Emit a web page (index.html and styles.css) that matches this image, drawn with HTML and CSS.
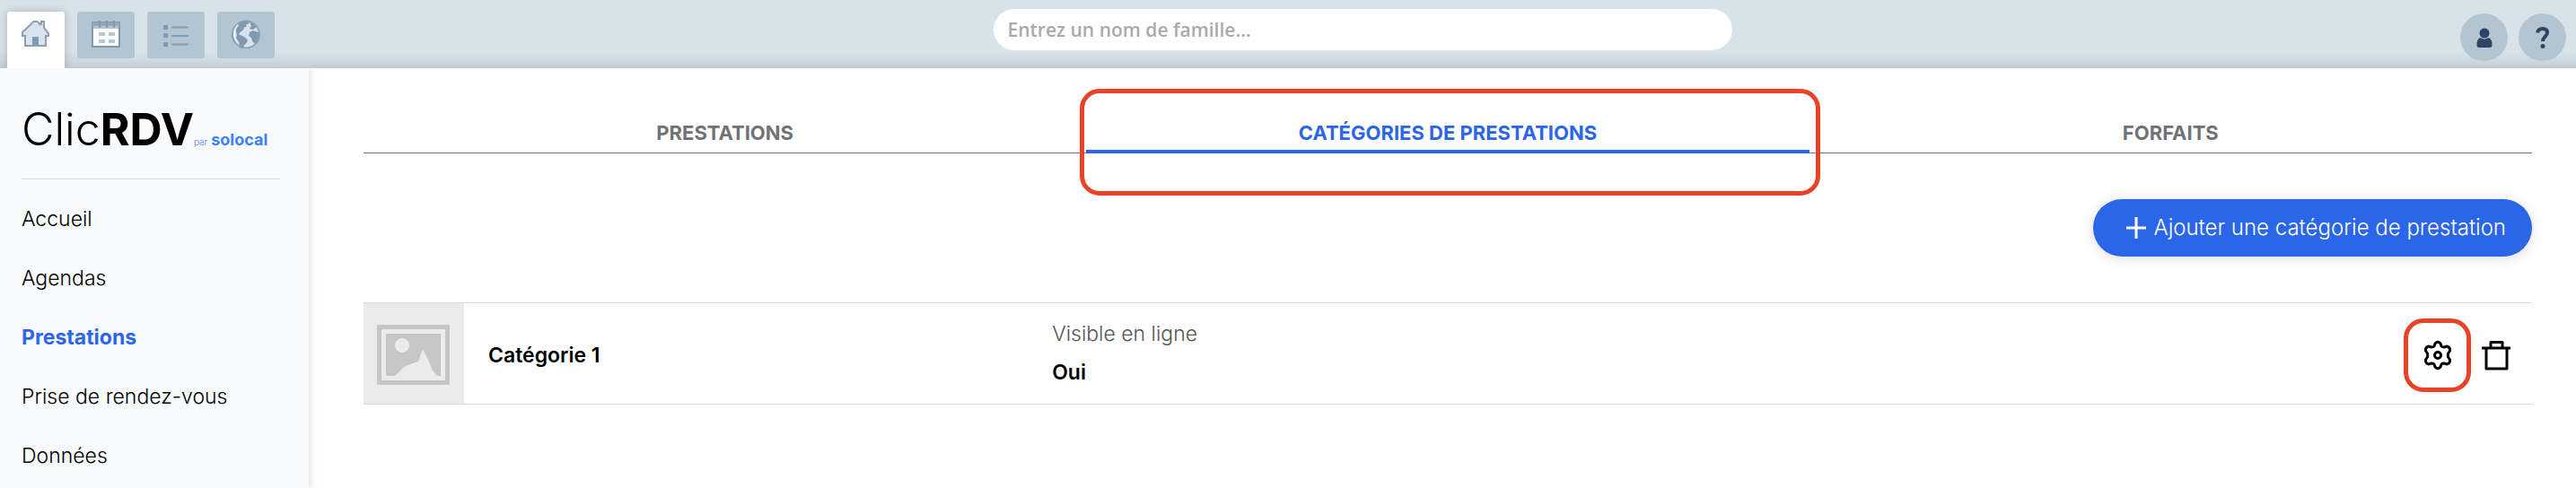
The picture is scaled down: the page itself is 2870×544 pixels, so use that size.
FILE: index.html
```html
<!DOCTYPE html>
<html lang="fr">
	<head>
		<meta charset="utf-8" />
		<title>ClicRDV - Catégories de prestations</title>
		<link rel="stylesheet" href="styles.css">
	</head>
	<body>
		<header class="topbar">
			<nav class="modules">
				<a href="#" class="module active" aria-label="Accueil">
					<svg width="32" height="32" viewBox="0 0 32 32">
						<path d="M1 17v-3L13.500 2h4L21 5.500 22 5V2h3v7l5 6v3h-3v11H4V18H1z" fill="#d8e3ee" stroke="#8aa2b7" stroke-width="2"/>
						<path d="M12 19h7v10h-7z" fill="#7f9ab1"/>
					</svg>
				</a>
				<a href="#" class="module" aria-label="Agenda">
					<svg width="32" height="32" viewBox="0 0 32 32">
						<path d="M1 3h30v27H1z" fill="#fff" stroke="#7f9ab1" stroke-width="2"/>
						<path d="M2 4h28v6H2z" fill="#b4c5d2"/>
						<path d="M1 3h30v4H1z" fill="#92a9bb"/>
						<path d="M9 1v8M17 1v8M25 1v8" stroke="#7f9ab1" stroke-width="2"/>
						<path d="M8 14h7v4H8zM19 14h7v4h-7zM8 22h7v4H8zM19 22h7v4h-7z" fill="#b7c7d3"/>
					</svg>
				</a>
				<a href="#" class="module" aria-label="Liste">
					<svg width="32" height="32" viewBox="0 0 32 32">
						<path d="M2 6h5v5H2zM2 15h5v5H2zM2 25h5v5H2z" fill="#7f9ab1"/>
						<path d="M12 8.500h17M12 18h17M12 27.500h17" stroke="#7f9ab1" stroke-width="2" stroke-linecap="round"/>
					</svg>
				</a>
				<a href="#" class="module" aria-label="Site web">
					<svg width="32" height="32" viewBox="0 0 32 32">
						<circle cx="16" cy="16.500" r="15" fill="#d8e3ee" stroke="#8aa2b7" stroke-width="2"/>
						<path d="M7 4.500Q11 1 17 1.500l3 1-1 2-3 1 1 2-3 1-1 3-3 2-2 3 3 1 4 2 3 3-1 3-3 3-1 4-4-2-1-6-3-4 1-4-2-5z" fill="#7f9ab1"/>
						<path d="M7 5q-5 5-5 12 1 5 4 8l-2-7 1-8 3-4z" fill="#f2f6f9"/>
						<path d="M20 3q5 1 8 6l-4 2-4-1 2-3z" fill="#7f9ab1"/>
						<path d="M20 14l4-2 6 2q2 7-4 13l-3-3-1-4-3-2z" fill="#7f9ab1"/>
						<path d="M24 10l4-1v2z" fill="#d8e3ee"/>
					</svg>
				</a>
			</nav>
			<form class="search">
				<input type="text" aria-label="Rechercher un client" placeholder="Entrez un nom de famille...">
			</form>
			<div class="tools">
				<button type="button" class="round" aria-label="Mon compte">
					<svg width="18" height="22" viewBox="0 0 18 22">
						<circle cx="9" cy="6" r="5.500" fill="#2c4566"/>
						<path d="M4.500 11Q9 14.500 13.500 11q4 1 4 8 0 3-2.500 3H3q-2.500 0-2.500-3 0-7 4-8z" fill="#2c4566"/>
					</svg>
				</button>
				<button type="button" class="round" aria-label="Aide">
					<svg width="16" height="24" viewBox="0 0 16 24">
						<path d="M2 6.500C2.500 3.500 5 2 8 2s5 1.500 5 4.500c0 4-5 4.500-5 9.500" fill="none" stroke="#2c4566" stroke-width="4"/>
						<circle cx="8" cy="21.500" r="2.500" fill="#2c4566"/>
					</svg>
				</button>
			</div>
		</header>
		<div class="page">
			<aside class="sidebar">
				<div class="logo">
					<span class="clic">Clic</span><span class="rdv">RDV</span>
					<span class="par">par</span>
					<span class="solocal">solocal</span>
				</div>
				<ul class="menu">
					<li><a href="#">Accueil</a></li>
					<li><a href="#">Agendas</a></li>
					<li><a href="#" class="current">Prestations</a></li>
					<li><a href="#">Prise de rendez-vous</a></li>
					<li><a href="#">Données</a></li>
				</ul>
			</aside>
			<main class="content">
				<nav class="tabs">
					<a href="#" class="tab">PRESTATIONS</a>
					<a href="#" class="tab selected">CATÉGORIES DE PRESTATIONS</a>
					<a href="#" class="tab">FORFAITS</a>
				</nav>
				<div class="actions">
					<button type="button" class="add">
						<svg width="22" height="24" viewBox="0 0 22 24">
							<path d="M11 0v24M0 12h22" stroke="#fff" stroke-width="3"/>
						</svg>
						Ajouter une catégorie de prestation
					</button>
				</div>
				<div class="category">
					<svg class="thumb" width="112" height="112" viewBox="0 0 112 112">
						<path d="M0 0h112v112H0z" fill="#ebebeb"/>
						<path d="M17.500 26.500h76v62h-76z" fill="#ebebeb" stroke="#c6c6c6" stroke-width="5"/>
						<path d="M25 34h61v47H25z" fill="#c6c6c6"/>
						<circle cx="43" cy="47" r="8" fill="#ebebeb"/>
						<path d="M35 81l10-10 10-4 6-2 5-14 6 12 5 12 5 6z" fill="#ebebeb"/>
					</svg>
					<div class="name">Catégorie 1</div>
					<div class="online">
						<div class="label">Visible en ligne</div>
						<div class="value">Oui</div>
					</div>
					<div class="buttons">
						<button type="button" class="icon settings" aria-label="Paramètres">
							<svg width="32" height="34" viewBox="0 0 32 34">
								<path d="M13 4Q16 .500 19 4l1 3q1 1 3 1l3-1q4 1 3.500 5l-2 3q-.500 2 0 4l2 3q.500 4-3.500 5l-3-1q-2 0-3 1l-1 3q-3 3.500-6 0l-1-3q-1-1-3-1l-3 1q-4-1-3.500-5l2-3q.500-2 0-4l-2-3Q2 8 6 7l3 1q2 0 3-1z" fill="none" stroke="#000" stroke-width="3"/>
								<circle cx="16" cy="17" r="3.500" fill="none" stroke="#000" stroke-width="3"/>
							</svg>
						</button>
						<button type="button" class="icon" aria-label="Supprimer">
							<svg width="32" height="34" viewBox="0 0 32 34">
								<path d="M0 9h32M5 9v23h23V9M10 9V2.500h13V9" fill="none" stroke="#000" stroke-width="3" stroke-linejoin="round"/>
							</svg>
						</button>
					</div>
				</div>
			</main>
		</div>
	</body>
</html>
```

FILE: styles.css
```css
*{
	margin: 0;
	padding: 0;
	box-sizing: border-box;
}
body{
	min-height: 100vh;
	display: flex;
	flex-direction: column;
	font-family: Inter, "Open Sans", sans-serif;
	font-size: 23px;
	line-height: 32px;
	color: #000;
	background-color: #fff;
}
a{
	color: inherit;
	text-decoration: none;
}
ul li{
	list-style: none;
}
button{
	border: none;
	background: none;
	font: inherit;
	cursor: pointer;
}
svg{
	display: block;
	flex: none;
}

/* top bar */
.topbar{
	height: 76px;
	display: grid;
	grid-template-columns: 13fr 823px 11fr;
	padding: 0 11px 0 8px;
	background: linear-gradient(#d8e3e9 0, #d8e3e9 56px, #ced9df 68px, #c0cad0 76px);
}
.modules{
	display: flex;
	gap: 14px;
	padding-top: 13px;
}
.module{
	width: 64px;
	height: 52px;
	display: flex;
	justify-content: center;
	padding-top: 9px;
	border-radius: 3px;
	background-color: #b4c5d2;
}
.module.active{
	height: 63px;
	border-radius: 3px 3px 0 0;
	background-color: #fff;
	box-shadow: 0 0 10px rgba(0,0,0,0.2);
	clip-path: inset(-12px -12px 0 -12px);
}
.search{
	padding-top: 10px;
}
.search input{
	display: block;
	width: 100%;
	height: 46px;
	padding: 0 16px;
	border: none;
	border-radius: 23px;
	background-color: #fff;
	font: 600 21px "Open Sans", sans-serif;
}
.search input::placeholder{
	color: #aaa;
	opacity: 1;
}
.tools{
	display: flex;
	justify-content: flex-end;
	gap: 12px;
	padding-top: 15px;
}
.round{
	width: 53px;
	height: 53px;
	display: flex;
	align-items: center;
	justify-content: center;
	border-radius: 50%;
	background-color: #b4c5d2;
}

/* sidebar */
.page{
	flex: 1;
	display: flex;
}
.sidebar{
	width: 344px;
	flex: none;
	padding: 36px 32px 0 24px;
	background-color: #f9fafc;
	box-shadow: 2px 0 8px rgba(0,0,0,0.12);
	clip-path: inset(0 -12px 0 0);
	font-weight: 300;
}
.logo{
	height: 88px;
	display: flex;
	align-items: baseline;
	border-bottom: 1px solid #d9dbde;
	line-height: 64px;
}
.clic{
	font-size: 50px;
}
.rdv{
	font-size: 50px;
	font-weight: 700;
}
.par{
	margin-right: 4px;
	font-size: 10px;
	color: #4a80f5;
}
.solocal{
	font-size: 18px;
	font-weight: 700;
	color: #3b82fb;
}
.menu{
	padding-top: 11px;
}
.menu a{
	display: block;
	line-height: 66px;
}
.menu .current{
	font-weight: 700;
	color: #2c66e8;
}

/* content */
.content{
	flex: 1;
	padding: 44px 49px 0 61px;
}
.tabs{
	display: grid;
	grid-template-columns: repeat(3, 1fr);
	font-size: 22px;
}
.tab{
	position: relative;
	height: 51px;
	padding-top: 12px;
	border-bottom: 1px solid #717178;
	text-align: center;
	font-weight: 700;
	color: #717178;
}
.tab.selected{
	border-bottom: 4px solid #2c66e8;
	color: #2c66e8;
}
.tab.selected:after{
	content: "";
	position: absolute;
	top: -21px;
	right: -12px;
	bottom: -51px;
	left: -7px;
	border: 5px solid #e94226;
	border-radius: 22px;
}
.actions{
	display: flex;
	justify-content: flex-end;
	padding: 51px 0;
}
.add{
	height: 64px;
	display: flex;
	align-items: center;
	gap: 8px;
	padding: 0 29px 0 37px;
	border-radius: 32px;
	background-color: #2c66e8;
	box-shadow: 0 2px 14px rgba(0,0,0,0.14);
	font-size: 24px;
	font-weight: 300;
	color: #fff;
}
.category{
	display: flex;
	align-items: center;
	border-top: 1px solid #d9d9d9;
	border-bottom: 1px solid #d9d9d9;
}
.name{
	width: 26%;
	margin-left: 27px;
	padding-top: 4px;
	font-weight: 600;
}
.online{
	flex: 1;
	line-height: 43px;
}
.label{
	font-weight: 300;
	color: #555;
}
.value{
	font-weight: 600;
}
.buttons{
	display: flex;
	align-items: center;
	gap: 12px;
	padding-top: 4px;
	padding-right: 24px;
}
.icon{
	display: flex;
	align-items: center;
	justify-content: center;
}
.settings{
	width: 75px;
	height: 82px;
	border: 5px solid #e94226;
	border-radius: 22px;
}
```
